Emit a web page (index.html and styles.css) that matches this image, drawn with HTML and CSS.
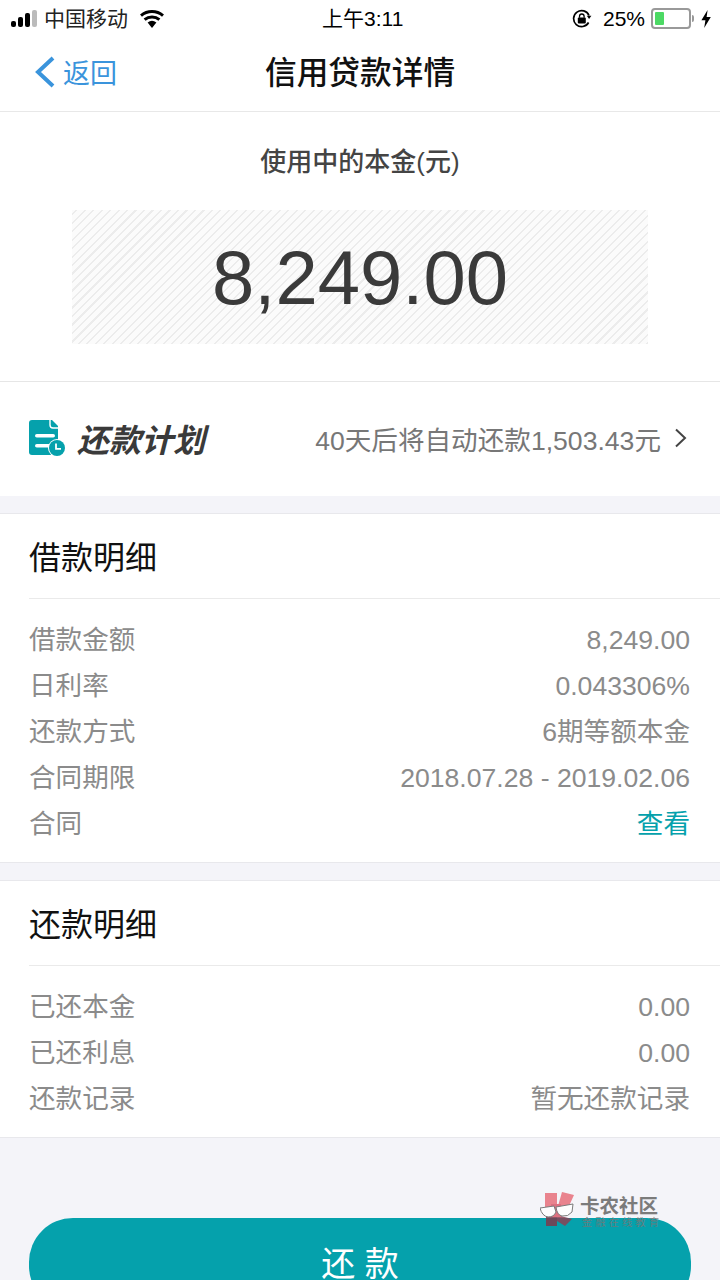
FILE: index.html
```html
<!DOCTYPE html>
<html>
<head>
  <meta charset="UTF-8">
  <title>信用贷款详情</title>
  <meta name="viewport" content="width=device-width, initial-scale=1.0">
  <link rel="stylesheet" href="styles.css">
</head>
<body>
<div class="page">
  <div class="status-bar">
    <div class="status-left">
      <div class="signal"><i></i><i></i><i></i><i class="off"></i></div>
      <span class="carrier">中国移动</span>
      <svg class="wifi" width="26" height="20" viewBox="0 0 26 20"><path d="M13 19 L8.6 13.6 A7 7 0 0 1 17.4 13.6 Z" fill="#000"/><path d="M5.6 10.6 A11.5 11.5 0 0 1 20.4 10.6" fill="none" stroke="#000" stroke-width="3"/><path d="M2 6.6 A17 17 0 0 1 24 6.6" fill="none" stroke="#000" stroke-width="3"/></svg>
    </div>
    <div class="status-time">上午3:11</div>
    <div class="status-right">
      <svg class="lock" width="20" height="20" viewBox="0 0 20 20"><path d="M16.6 13.5 A8 8 0 1 1 17 6.5" fill="none" stroke="#000" stroke-width="1.7"/><path d="M14.8 6.8 H19.4 L17.1 10 Z" fill="#000"/><rect x="5.8" y="8.6" width="8" height="6" rx="1" fill="#000"/><path d="M7.5 8.8 V7.3 A2.3 2.3 0 0 1 12.1 7.3 V8.8" fill="none" stroke="#000" stroke-width="1.3"/></svg>
      <span class="battery-pct">25%</span>
      <div class="battery"><div class="battery-fill"></div></div>
      <div class="battery-tip"></div>
      <svg class="bolt" width="12" height="20" viewBox="0 0 12 20"><path d="M7.6 1 L1.4 11.2 H5.4 L4.2 19 L10.8 8 H6.6 Z" fill="#000"/></svg>
    </div>
  </div>

  <div class="nav">
    <div class="back">
      <svg width="24" height="34" viewBox="0 0 24 34"><path d="M20 3 L5 17 L20 31" fill="none" stroke="#3a94dc" stroke-width="4"/></svg>
      <span>返回</span>
    </div>
    <div class="nav-title">信用贷款详情</div>
  </div>

  <div class="principal">
    <div class="principal-label">使用中的本金(元)</div>
    <div class="principal-box">8,249.00</div>
  </div>

  <div class="plan">
    <div class="plan-left">
      <svg width="37" height="37" viewBox="0 0 37 37">
        <path d="M3 0 H23 L29 6 V35 H3 A3 3 0 0 1 0 32 V3 A3 3 0 0 1 3 0 Z" fill="#05a1ac"/>
        <path d="M21 0 V5 A3 3 0 0 0 24 8 H29" fill="none" stroke="#fff" stroke-width="1.4"/>
        <rect x="6" y="14" width="20" height="3.6" rx="1.8" fill="#fff"/>
        <rect x="6" y="24" width="16" height="3.6" rx="1.8" fill="#fff"/>
        <circle cx="28" cy="28" r="9" fill="#fff"/>
        <circle cx="28" cy="28" r="8" fill="#05a1ac"/>
        <path d="M27 23.5 V28.8 H32" fill="none" stroke="#fff" stroke-width="1.8"/>
      </svg>
      <span class="plan-title">还款计划</span>
    </div>
    <div class="plan-right">
      <span>40天后将自动还款1,503.43元</span>
      <svg width="14" height="20" viewBox="0 0 14 20"><path d="M2 1.5 L11 10 L2 18.5" fill="none" stroke="#444" stroke-width="2"/></svg>
    </div>
  </div>

  <div class="card card-loan">
    <div class="card-title">借款明细</div>
    <div class="rows">
      <div class="row"><span>借款金额</span><span class="num">8,249.00</span></div>
      <div class="row"><span>日利率</span><span class="num">0.043306%</span></div>
      <div class="row"><span>还款方式</span><span class="num">6期等额本金</span></div>
      <div class="row"><span>合同期限</span><span class="num">2018.07.28 - 2019.02.06</span></div>
      <div class="row"><span>合同</span><span class="link">查看</span></div>
    </div>
  </div>

  <div class="card card-repay">
    <div class="card-title">还款明细</div>
    <div class="rows">
      <div class="row"><span>已还本金</span><span class="num">0.00</span></div>
      <div class="row"><span>已还利息</span><span class="num">0.00</span></div>
      <div class="row"><span>还款记录</span><span class="num">暂无还款记录</span></div>
    </div>
  </div>

  <div class="footer">
    <div class="repay-btn">还 款</div>
    <div class="watermark">
      <svg width="36" height="36" viewBox="0 0 36 36">
        <path d="M5 1 H17 V15 H5 Z" fill="#e8707c"/>
        <path d="M22 0 L34 3 L29 14 L18 14 Z" fill="#e8707c"/>
        <path d="M6 24 H17 V34 L6 34 Z" fill="#7d3a4c"/>
        <path d="M17 23 L32 27 L25 34 L17 29 Z" fill="#8c4054"/>
        <rect x="11" y="12" width="10" height="13" fill="#d95a6c"/>
        <path d="M0 16 L14 14 L16 20 Q14 25 8 25 Q2 24 0 16 Z" fill="#fff" stroke="#666" stroke-width="1"/>
        <path d="M16 15 L33 12 L32 20 Q28 25 22 24 Q17 23 16 15 Z" fill="#fff" stroke="#666" stroke-width="1"/>
      </svg>
      <div class="watermark-text">
        <div class="wm-main">卡农社区</div>
        <div class="wm-sub">金融在线教育</div>
      </div>
    </div>
  </div>
</div>
</body>
</html>
```

FILE: styles.css
```css
html, body {
  margin: 0;
  padding: 0;
  background: #f4f4f9;
  font-family: "Liberation Sans", "Noto Sans CJK SC", sans-serif;
}

.page {
  width: 720px;
  height: 1280px;
  overflow: hidden;
}

.status-bar {
  position: relative;
  height: 40px;
  padding: 0 8px 3px 11px;
  box-sizing: border-box;
  background: #fff;
  display: flex;
  justify-content: space-between;
  align-items: center;
  font-size: 21px;
  color: #000;
}

.status-left, .status-right {
  display: flex;
  align-items: center;
}

.signal {
  display: flex;
  align-items: flex-end;
  gap: 2px;
  margin-right: 7px;
}

.signal i {
  display: block;
  width: 5px;
  background: #000;
  border-radius: 2px;
}

.signal i:nth-child(1) { height: 6px; }
.signal i:nth-child(2) { height: 10px; }
.signal i:nth-child(3) { height: 14px; }
.signal i:nth-child(4) { height: 17px; background: #bbb; }

.carrier {
  margin: 0 11px 3px 0;
  color: #222;
}

.status-time {
  position: absolute;
  left: 322px;
  top: 6px;
  font-size: 21px;
  line-height: 26px;
}

.lock {
  margin-right: 11px;
}

.battery-pct {
  font-size: 21px;
  margin-right: 6px;
}

.battery {
  box-sizing: content-box;
  width: 32px;
  height: 13px;
  border: 2px solid #999;
  border-radius: 4px;
  padding: 2px;
}

.battery-fill {
  width: 9px;
  height: 100%;
  background: #4cd964;
  border-radius: 1px;
}

.battery-tip {
  width: 2px;
  height: 7px;
  margin: 0 6px 0 1px;
  background: #999;
  border-radius: 0 2px 2px 0;
}

.nav {
  position: relative;
  height: 72px;
  box-sizing: border-box;
  padding-left: 33px;
  padding-bottom: 8px;
  background: #fff;
  border-bottom: 1px solid #e8e8e8;
  display: flex;
  align-items: center;
}

.back {
  display: flex;
  align-items: center;
  gap: 6px;
  color: #3a94dc;
  font-size: 27px;
}

.nav-title {
  position: absolute;
  left: 0;
  right: 0;
  top: 9px;
  text-align: center;
  font-size: 31.7px;
  line-height: 48px;
  font-weight: 500;
  color: #111;
}

.principal {
  height: 270px;
  box-sizing: border-box;
  padding-top: 30px;
  background: #fff;
  border-bottom: 1px solid #e6e6e6;
  display: flex;
  flex-direction: column;
  align-items: center;
}

.principal-label {
  font-size: 26px;
  line-height: 40px;
  font-weight: 500;
  color: #444;
}

.principal-box {
  width: 576px;
  height: 134px;
  margin-top: 28px;
  background: repeating-linear-gradient(-45deg, #ececec 0, #ececec 1.5px, #fbfbfb 1.5px, #fbfbfb 6px);
  display: flex;
  justify-content: center;
  align-items: center;
  font-size: 76px;
  color: #3a3a3a;
}

.plan {
  height: 114px;
  padding: 0 32px 2px 29px;
  box-sizing: border-box;
  background: #fff;
  display: flex;
  justify-content: space-between;
  align-items: center;
}

.plan-left {
  display: flex;
  align-items: center;
  gap: 11px;
}

.plan-title {
  font-size: 32px;
  font-style: italic;
  font-weight: 700;
  color: #3a3a3a;
}

.plan-right {
  display: flex;
  align-items: center;
  gap: 13px;
  font-size: 26.6px;
  color: #777;
}

.card {
  margin-top: 17px;
  padding-left: 29px;
  background: #fff;
  border-top: 1px solid #e8e8ec;
  border-bottom: 1px solid #e8e8ec;
}

.card-title {
  height: 85px;
  box-sizing: border-box;
  padding-bottom: 2px;
  display: flex;
  align-items: center;
  font-size: 32px;
  color: #111;
  border-bottom: 1px solid #eaeaea;
}

.rows {
  padding: 21px 30px 18px 0;
  display: flex;
  flex-direction: column;
  gap: 6px;
}

.row {
  height: 40px;
  display: flex;
  justify-content: space-between;
  align-items: baseline;
  font-size: 26.6px;
  line-height: 40px;
  color: #8b8b8b;
}

.link {
  color: #05a1ac;
}

.footer {
  position: relative;
  padding: 80px 29px 0;
}

.repay-btn {
  height: 92px;
  background: #05a1ac;
  border-radius: 44px;
  text-align: center;
  color: #fff;
  font-size: 34px;
  line-height: 92px;
}

.watermark {
  position: absolute;
  left: 540px;
  top: 54px;
  display: flex;
  gap: 4px;
  opacity: 0.85;
}

.watermark-text {
  margin-top: 3px;
}

.wm-main {
  font-size: 19.5px;
  line-height: 22px;
  font-weight: 700;
  color: #666;
}

.wm-sub {
  margin-left: 2px;
  font-size: 10px;
  line-height: 12px;
  letter-spacing: 3.4px;
  color: #777;
  white-space: nowrap;
}
```
